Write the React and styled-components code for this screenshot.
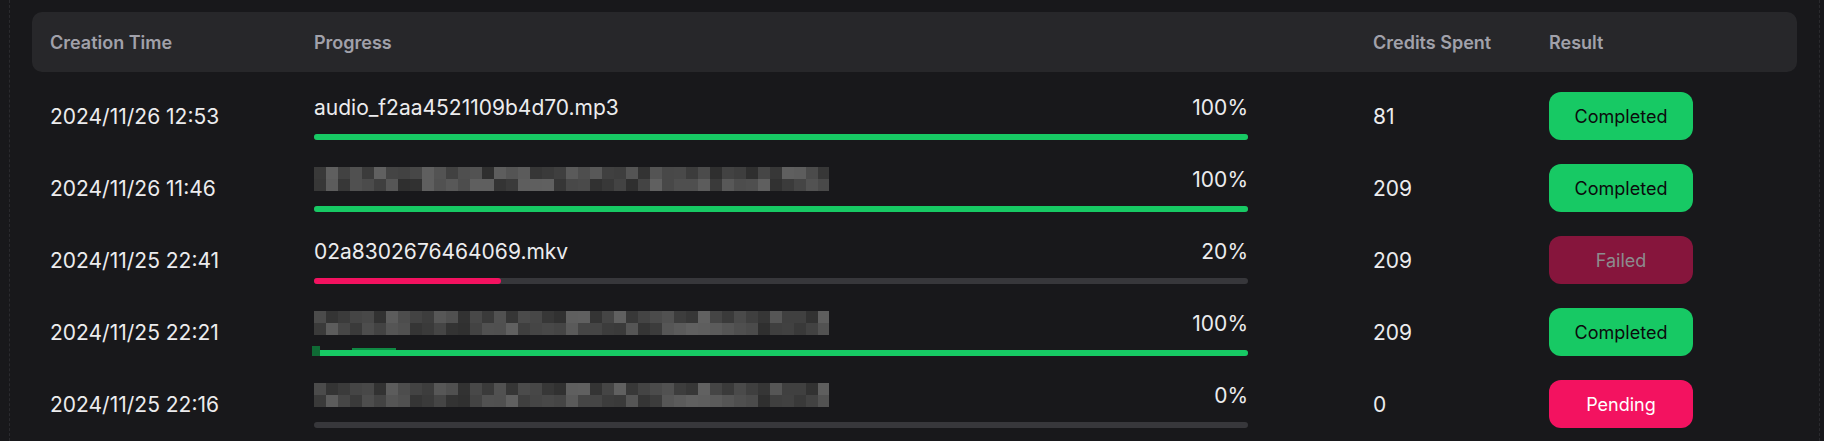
import React from "react";
import styled, { createGlobalStyle } from "styled-components";

const GlobalStyle = createGlobalStyle`
  html, body { margin: 0; padding: 0; background: #18181b; }
  body {
    font-family: Inter, "Noto Sans", sans-serif;
    color: #ececee;
    overflow: hidden;
    -webkit-font-smoothing: antialiased;
  }
`;

const Frame = styled.div`
  box-sizing: border-box;
  height: 441px;
  margin: 0 4px 0 9px;
  padding: 12px 22px 0 22px;
  border-left: 1px dashed #2a2a2e;
  border-right: 1px dashed #2a2a2e;
`;

const columns = "264px 1059px 176px 1fr";

const HeaderRow = styled.div`
  display: grid;
  grid-template-columns: ${columns};
  align-items: center;
  height: 60px;
  padding-left: 18px;
  background: #27272a;
  border-radius: 10px;
`;

const HeadCell = styled.div`
  font-size: 18px;
  font-weight: 600;
  color: #a1a1aa;
`;

const Body = styled.div`
  margin-top: 8px;
`;

const Row = styled.div`
  display: grid;
  grid-template-columns: ${columns};
  align-items: center;
  height: 72px;
  padding-left: 18px;
`;

const TextCell = styled.div`
  font-size: 21px;
  color: #ececee;
`;

const ProgressCell = styled.div`
  width: 934px;
  display: flex;
  flex-direction: column;
  gap: 15px;
  margin-top: 3px;
`;

const ProgressTop = styled.div`
  display: flex;
  justify-content: space-between;
  align-items: center;
  height: 24px;
  font-size: 21px;
  color: #ececee;
`;

const Track = styled.div`
  position: relative;
  height: 6px;
  border-radius: 3px;
  background: #37373b;
`;

const Fill = styled.div`
  height: 100%;
  border-radius: 3px;
  background: ${(p) => (p.$tone === "danger" ? "#f31260" : "#17c964")};
`;

const Artifact = styled.div`
  position: absolute;
  left: -2px;
  top: -4px;
  width: 8px;
  height: 10px;
  background: #0f6a35;
`;

const ArtifactLine = styled.div`
  position: absolute;
  left: 38px;
  top: -2px;
  width: 44px;
  height: 2px;
  background: #0f8a44;
`;

const badgeTones = {
  success: { bg: "#17c964", fg: "#0b0b0c" },
  failed: { bg: "#86153c", fg: "#8c8c8e" },
  pending: { bg: "#f31260", fg: "#ffffff" },
};

const Badge = styled.div`
  width: 144px;
  height: 48px;
  border-radius: 12px;
  display: flex;
  align-items: center;
  justify-content: center;
  font-size: 18px;
  background: ${(p) => badgeTones[p.$tone].bg};
  color: ${(p) => badgeTones[p.$tone].fg};
`;

function Mosaic({ seed = 1, width = 515 }) {
  let s = seed * 9301 + 49297;
  const rnd = () => {
    s = (s * 9301 + 49297) % 233280;
    return s / 233280;
  };
  const rects = [];
  const bw = 12;
  const cols = Math.ceil(width / bw);
  for (let r = 0; r < 2; r++) {
    for (let c = 0; c < cols; c++) {
      const v = Math.round(0x2e + rnd() * 0x34);
      const hex = v.toString(16).padStart(2, "0");
      const w = c === cols - 1 ? width - c * bw : bw;
      rects.push(
        <rect key={`${r}-${c}`} x={c * bw} y={r * 12} width={w} height={12} fill={`#${hex}${hex}${hex}`} />
      );
    }
  }
  return (
    <svg width={width} height={24} viewBox={`0 0 ${width} 24`} aria-hidden="true">
      {rects}
    </svg>
  );
}

const rows = [
  { time: "2024/11/26 12:53", name: "audio_f2aa4521109b4d70.mp3", pct: 100, credits: "81", result: "success" },
  { time: "2024/11/26 11:46", blur: 3, pct: 100, credits: "209", result: "success" },
  { time: "2024/11/25 22:41", name: "02a8302676464069.mkv", pct: 20, credits: "209", result: "failed", tone: "danger" },
  { time: "2024/11/25 22:21", blur: 7, pct: 100, credits: "209", result: "success", artifact: true },
  { time: "2024/11/25 22:16", blur: 7, pct: 0, credits: "0", result: "pending" },
];

const labels = { success: "Completed", failed: "Failed", pending: "Pending" };

export default function App() {
  return (
    <>
      <GlobalStyle />
      <Frame>
        <HeaderRow>
          <HeadCell>Creation Time</HeadCell>
          <HeadCell>Progress</HeadCell>
          <HeadCell>Credits Spent</HeadCell>
          <HeadCell>Result</HeadCell>
        </HeaderRow>
        <Body>
          {rows.map((r, i) => (
            <Row key={i}>
              <TextCell>{r.time}</TextCell>
              <ProgressCell>
                <ProgressTop>
                  {r.blur ? <Mosaic seed={r.blur} /> : <span>{r.name}</span>}
                  <span>{r.pct}%</span>
                </ProgressTop>
                <Track>
                  {r.pct > 0 && <Fill $tone={r.tone} style={{ width: `${r.pct}%` }} />}
                  {r.artifact && <Artifact />}
                  {r.artifact && <ArtifactLine />}
                </Track>
              </ProgressCell>
              <TextCell>{r.credits}</TextCell>
              <div>
                <Badge $tone={r.result}>{labels[r.result]}</Badge>
              </div>
            </Row>
          ))}
        </Body>
      </Frame>
    </>
  );
}
